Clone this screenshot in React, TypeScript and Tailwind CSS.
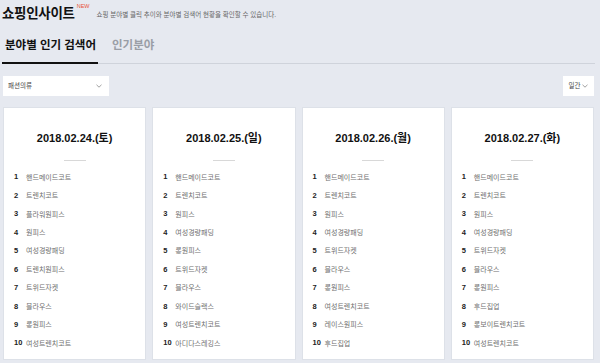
import React from "react";

const font = { fontFamily: '"Liberation Sans", "Noto Sans CJK KR", sans-serif' };

const data = [
  { date: "2018.02.24.(토)", items: ["핸드메이드코트", "트렌치코트", "플라워원피스", "원피스", "여성경량패딩", "트렌치원피스", "트위드자켓", "블라우스", "롱원피스", "여성트렌치코트"] },
  { date: "2018.02.25.(일)", items: ["핸드메이드코트", "트렌치코트", "원피스", "여성경량패딩", "롱원피스", "트위드자켓", "블라우스", "와이드슬랙스", "여성트렌치코트", "아디다스레깅스"] },
  { date: "2018.02.26.(월)", items: ["핸드메이드코트", "트렌치코트", "원피스", "여성경량패딩", "트위드자켓", "블라우스", "롱원피스", "여성트렌치코트", "레이스원피스", "후드집업"] },
  { date: "2018.02.27.(화)", items: ["핸드메이드코트", "트렌치코트", "원피스", "여성경량패딩", "트위드자켓", "블라우스", "롱원피스", "후드집업", "롱보이트렌치코트", "여성트렌치코트"] },
];

function Chevron({ className = "" }: { className?: string }) {
  return (
    <svg width="6" height="4" viewBox="0 0 6 4" className={className}>
      <path d="M0.5 0.8 L3 3.2 L5.5 0.8" fill="none" stroke="#888" strokeWidth="0.8" />
    </svg>
  );
}

export default function App() {
  return (
    <div className="w-[600px] h-[363px] overflow-hidden bg-[#e6e9f0] text-[#222]" style={font}>
      <div className="flex items-end pl-[2px] pt-[2px] h-[20px]">
        <span className="text-[13.5px] font-bold leading-none tracking-[-0.3px] text-[#111]">쇼핑인사이트</span>
        <span className="self-start text-[5.5px] text-[#e8513a] ml-[2px] mt-[2px] leading-none">NEW</span>
        <span className="text-[6.5px] text-[#666] ml-[7px] mb-[2px] leading-none">쇼핑 분야별 클릭 추이와 분야별 검색어 현황을 확인할 수 있습니다.</span>
      </div>
      <div className="mt-[14px] ml-[2px] mr-[5px] flex border-b border-[#cfd3db] h-[30px]">
        <div className="w-[96px] pl-[3px] border-b-2 border-[#111] -mb-[1px] text-[11.5px] font-semibold text-[#111] leading-none pt-[6px] whitespace-nowrap">분야별 인기 검색어</div>
        <div className="ml-[14px] text-[11.5px] font-semibold text-[#9a9ea6] leading-none pt-[6px]">인기분야</div>
      </div>
      <div className="flex justify-between pl-[3px] pr-[6px] mt-[12px]">
        <div className="w-[106px] h-[20px] bg-white flex items-center justify-between px-[5px]">
          <span className="text-[6.5px] text-[#444]">패션의류</span>
          <Chevron className="mr-[2px]" />
        </div>
        <div className="w-[31px] h-[20px] bg-white flex items-center justify-center gap-[2px]">
          <span className="text-[6.5px] text-[#444]">일간</span>
          <Chevron />
        </div>
      </div>
      <div className="grid grid-cols-4 gap-[6px] pl-[3px] pr-[6px] mt-[11px]">
        {data.map((c) => (
          <div key={c.date} className="bg-white h-[253px] border border-[#dde1e8] flex flex-col">
            <div className="text-center text-[11px] font-bold text-[#111] pt-[22px] leading-[16px]">{c.date}</div>
            <div className="mx-auto mt-[14px] w-[22px] h-px bg-[#d8d8d8]" />
            <div className="mt-[7px] pl-[10px] flex flex-col">
              {c.items.map((it, i) => (
                <div key={i} className="h-[18.45px] flex items-center leading-none">
                  <span className="w-[12px] text-[7.5px] font-bold text-[#222]">{i + 1}</span>
                  <span className="text-[7px] text-[#6f6f6f]">{it}</span>
                </div>
              ))}
            </div>
          </div>
        ))}
      </div>
    </div>
  );
}
